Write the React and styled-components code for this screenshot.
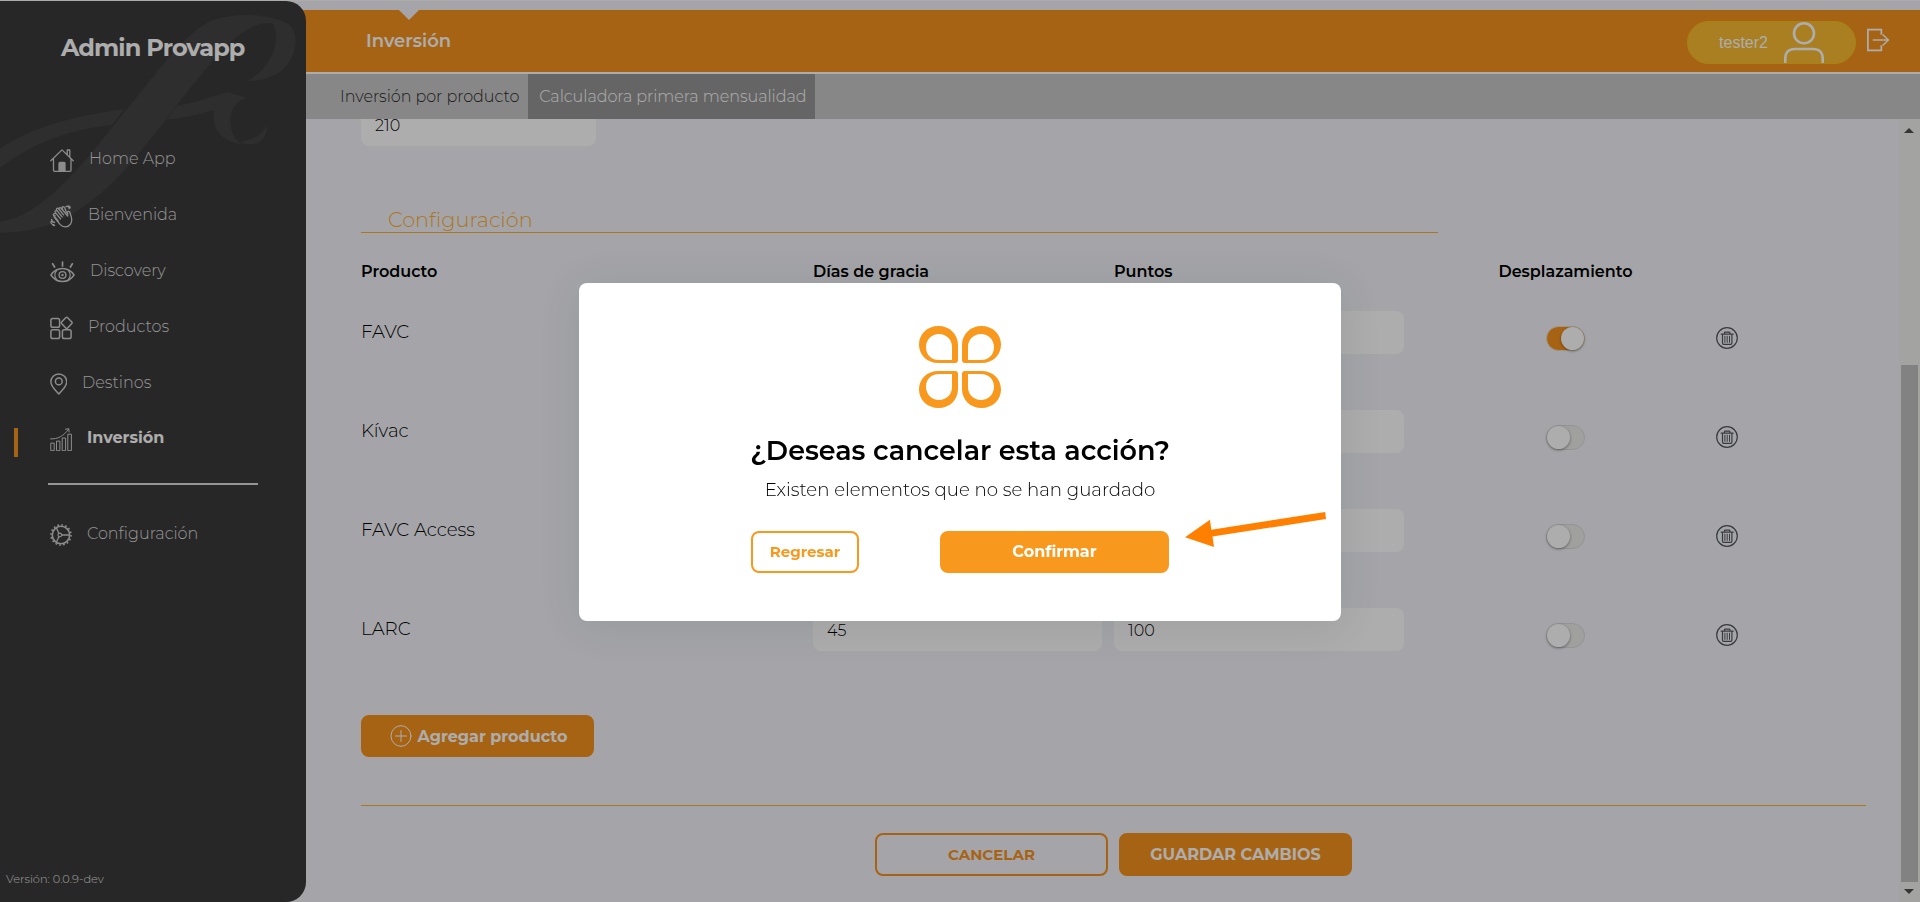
import React, { useState } from "react";
import styled, { createGlobalStyle } from "styled-components";

const GlobalStyle = createGlobalStyle`
  * {
    box-sizing: border-box;
  }
  body {
    margin: 0;
    font-family: "Montserrat", "Inter", sans-serif;
    font-size: 16px;
    color: #000;
    overflow: hidden;
  }
  button, input {
    font-family: inherit;
  }
`;

const Page = styled.div`
  display: flex;
  height: 902px;
  border-top: 1px solid #fefffb;
  background-color: #f3f4f9;
  overflow: hidden;
`;

/* sidebar */
const Sidebar = styled.aside`
  position: relative;
  z-index: 1;
  flex: none;
  width: 306px;
  display: flex;
  flex-direction: column;
  background-color: #3a3a3a;
  border-radius: 0 20px 20px 0;
  overflow: hidden;
`;
const Watermark = styled.svg`
  position: absolute;
  top: -1px;
  left: 0;
  z-index: -1;
`;
const Brand = styled.h1`
  margin: 0;
  height: 129px;
  padding: 32px 0 0 61px;
  font-size: 24px;
  font-weight: 700;
  line-height: 30px;
  letter-spacing: -0.9px;
  color: #fff;
`;
const NavItem = styled.a`
  position: relative;
  display: flex;
  align-items: center;
  gap: 15px;
  height: 55.8px;
  padding: 2px 0 0 50px;
  color: ${(props) => (props.$active ? "#fff" : "#dcdcdc")};
  font-weight: ${(props) => (props.$active ? 700 : 300)};
  svg {
    flex: none;
    margin-top: 3px;
    color: #cfcfcf;
  }
`;
const ActiveMark = styled.span`
  position: absolute;
  left: 14px;
  top: 19px;
  width: 4px;
  height: 29px;
  background-color: #f7931e;
`;
const Divider = styled.hr`
  width: 210px;
  height: 2px;
  margin: 18px 0 20px 48px;
  border: none;
  background-color: #dcdcdc;
`;
const Version = styled.span`
  margin-top: auto;
  padding: 0 0 16px 6px;
  font-size: 11.4px;
  font-weight: 300;
  color: #e4e4e4;
`;

/* top bar and tabs */
const Main = styled.main`
  flex: 1;
  min-width: 0;
  margin-left: -20px;
  padding-top: 9px;
  display: flex;
  flex-direction: column;
`;
const Header = styled.header`
  position: relative;
  flex: none;
  display: flex;
  align-items: center;
  height: 62px;
  padding: 0 30px 0 80px;
  background-color: #f7931e;
  color: #fff;
  > svg {
    margin-bottom: 2px;
  }
`;
const Notch = styled.span`
  position: absolute;
  top: 0;
  left: 113px;
  border: 10px solid transparent;
  border-top-color: #f3f4f9;
  border-bottom: none;
`;
const HeaderTitle = styled.h2`
  margin: 0;
  font-size: 18px;
  font-weight: 600;
`;
const User = styled.div`
  display: flex;
  justify-content: flex-end;
  align-items: center;
  gap: 16px;
  width: 169px;
  height: 43px;
  margin: 2px 10px 0 auto;
  padding-right: 31px;
  border: 1px solid #f7c21a;
  border-radius: 22px;
  background-color: #fabb32;
  font: 16px "Liberation Sans", Arial, sans-serif;
  span {
    padding-top: 2px;
  }
`;
const Tabs = styled.nav`
  flex: none;
  display: flex;
  height: 47px;
  padding-left: 43px;
  border-top: 2px solid #fff;
  background-color: #c8c8c8;
`;
const Tab = styled.a`
  display: flex;
  align-items: center;
  padding: 0 9px 0 11px;
  letter-spacing: -0.05px;
  font-weight: 300;
  color: ${(props) => (props.$active ? "#fff" : "#2b2b2b")};
  background-color: ${(props) => (props.$active ? "#969696" : "transparent")};
`;

/* content */
const Body = styled.div`
  flex: 1;
  min-height: 0;
  display: flex;
  justify-content: space-between;
`;
const Content = styled.section`
  width: 1580px;
  padding-left: 75px;
  overflow: hidden;
`;
const Input = styled.input`
  display: block;
  width: ${(props) => props.$width || "289px"};
  height: 43px;
  padding: 1px 13px 0 14px;
  border: none;
  border-radius: 8px;
  background-color: #fff;
  font-size: 16px;
  font-weight: 300;
  color: #000;
`;
const TopField = styled.div`
  margin-top: -16px;
`;
const SectionTitle = styled.h3`
  display: flex;
  align-items: flex-end;
  width: 1077px;
  height: 87px;
  margin: 0;
  padding-left: 27px;
  border-bottom: 1px solid #fbb034;
  font-size: 20.8px;
  font-weight: 300;
  color: #fbb034;
`;
const Row = styled.div`
  display: grid;
  grid-template-columns: 452px 301px 290px 312px 22px;
  align-items: center;
  height: 43px;
  margin-bottom: 56px;
  font-size: 18.3px;
  font-weight: 300;
`;
const HeadRow = styled(Row)`
  height: 78px;
  margin: 0;
  padding-bottom: 2px;
  font-size: 16px;
  font-weight: 600;
`;
const ProductName = styled.span`
  padding-bottom: 2px;
`;
const Centered = styled.div`
  display: flex;
  justify-content: center;
  padding-left: 11px;
`;
const Switch = styled.button`
  display: flex;
  justify-content: ${(props) => (props.$on ? "flex-end" : "flex-start")};
  width: 39px;
  height: 25px;
  margin-top: 11px;
  padding: 0;
  border: 1px solid ${(props) => (props.$on ? "#e9dccb" : "#d9d9d9")};
  border-radius: 13px;
  background-color: ${(props) => (props.$on ? "#f7931e" : "#ececeb")};
`;
const Knob = styled.span`
  width: 23px;
  height: 23px;
  border-radius: 50%;
  background-color: #fff;
  box-shadow: 0 1px 3px rgba(0, 0, 0, 0.4);
`;
const IconButton = styled.button`
  display: flex;
  margin-top: 11px;
  padding: 0;
  border: none;
  background: none;
  color: #55565c;
`;
const Button = styled.button`
  display: flex;
  align-items: center;
  justify-content: center;
  gap: 6px;
  width: ${(props) => props.$width || "233px"};
  height: ${(props) => props.$height || "42px"};
  padding: 0;
  border: 2px solid ${(props) => props.$color || "#f7931e"};
  border-radius: 8px;
  background-color: ${(props) =>
    props.$outline ? "transparent" : props.$color || "#f7931e"};
  font-size: ${(props) => (props.$outline ? "15px" : "16px")};
  font-weight: 700;
  color: ${(props) => (props.$outline ? props.$color || "#f7931e" : "#fff")};
`;
const AddRow = styled.div`
  margin-top: 64px;
  ${Button} {
    padding-left: 2px;
  }
`;
const Rows = styled.div`
  ${Row}:last-child {
    margin-bottom: 0;
  }
`;
const Footer = styled.footer`
  display: flex;
  justify-content: center;
  gap: 11px;
  margin-top: 48px;
  padding-top: 27px;
  border-top: 1px solid #fbb034;
`;
const Scrollbar = styled.div`
  flex: none;
  display: flex;
  flex-direction: column;
  align-items: center;
  justify-content: space-between;
  width: 21px;
  padding: 9px 1px 8px 0;
  background-color: #f0f0ee;
`;
const ScrollArrow = styled.span`
  border: 5px solid transparent;
  border-top: ${(props) => (props.$up ? "none" : "5px solid #505050")};
  border-bottom: ${(props) => (props.$up ? "5px solid #505050" : "none")};
`;
const Thumb = styled.div`
  width: 17px;
  height: 517px;
  margin-top: auto;
  margin-bottom: 7px;
  background-color: #c0c0c0;
`;

/* dialog */
const Overlay = styled.div`
  position: fixed;
  inset: 0;
  z-index: 10;
  display: flex;
  align-items: center;
  justify-content: center;
  padding-top: 2px;
  background-color: rgba(0, 0, 0, 0.32);
`;
const Dialog = styled.div`
  display: flex;
  flex-direction: column;
  align-items: center;
  width: 762px;
  height: 338px;
  padding-top: 43px;
  border-radius: 8px;
  background-color: #fff;
  box-shadow: 0 4px 46px 8px rgba(0, 0, 0, 0.08);
`;
const DialogTitle = styled.h2`
  margin: 26px 0 10px;
  font-size: 27px;
  font-weight: 600;
  line-height: 34px;
`;
const DialogText = styled.p`
  margin: 0 0 29px;
  font-size: 18.2px;
  font-weight: 300;
  line-height: 24px;
`;
const DialogActions = styled.div`
  display: flex;
  justify-content: space-between;
  width: 418px;
  ${Button} {
    padding-bottom: 2px;
  }
`;
const Pointer = styled.svg`
  position: absolute;
  left: 1180px;
  top: 505px;
  z-index: 11;
`;

const Stroke = ({ w, h, sw = 1.5, children }) => (
  <svg
    width={w}
    height={h}
    viewBox={`0 0 ${w} ${h}`}
    fill="none"
    stroke="currentColor"
    strokeWidth={sw}
    strokeLinecap="round"
    strokeLinejoin="round"
  >
    {children}
  </svg>
);

const HomeIcon = () => (
  <Stroke w={24} h={23} sw={1.3}>
    <path d="M.8 11.8 12 .9l11.2 10.9M3.5 9.8v11.4q0 1.1 1.1 1.1h15.3q1.1 0 1.1-1.1V9.8M17.2 5.5V1h2.6v7" />
    <path d="M9 22v-7.5q0-1 1-1h4q1 0 1 1V22z" fill="currentColor" />
  </Stroke>
);
const ClapIcon = () => (
  <Stroke w={23} h={23} sw={1.3}>
    <path d="M4.6 12.6 10 19.4c3 3.4 8.2 3.2 10.5-.3 1.8-2.7 1.4-5.4.5-8.1l-1.2-3.7c-.5-1.5-2.3-1.200-2.300.3l.2 3.400L10.900 3c-.9-1-2.500.1-1.700 1.300l4.300 5.500" />
    <path d="M9.400 4.700 8.300 3.600c-1.100-1-2.500.3-1.600 1.500l5.400 6.800M6.700 5.900C5.600 5.100 4.400 6.300 5.200 7.400l5.300 6.500M5 8.800c-1.100-.6-2.200.6-1.400 1.700l4.700 5.700M4.600 12.600c-.6-.9-.2-1.700.5-2M12.500 4.500 12 2.500c.9-1.200 2.200-.8 2.700.3l1.700 4.500" />
    <path d="M16 1.600c1.500-.9 3.300.2 3.100 2M18.600.8c1.100.2 1.700 1 1.600 2.100M1 16.400c-.2 2 1.100 3.400 3 3.200M1.600 14.400c.2 1.900 1.500 3 3 3.100M2.300 19.300c.5 1.100 1.300 1.400 2.300 1.300" />
  </Stroke>
);
const EyeIcon = () => (
  <Stroke w={25} h={22} sw={1.4}>
    <path d="M.9 14C3.6 9.9 7.6 7.5 12.5 7.5S21.4 9.9 24.1 14c-2.7 4-6.7 6.5-11.6 6.5S3.6 18 .9 14z" />
    <path d="M6.700 9.200c-2.400 2.800-2.400 6.800 0 9.600M18.300 9.200c2.400 2.800 2.400 6.800 0 9.600" />
    <circle cx="12.5" cy="14" r="3.4" />
    <path d="M12.5 1v4M2.600 2.800l2 3.200M22.400 2.800l-2 3.200" strokeWidth="1.7" />
    <circle cx="12.5" cy="14" r=".5" />
  </Stroke>
);
const ProductsIcon = () => (
  <Stroke w={23} h={24} sw={1.5}>
    <rect x=".9" y="2.6" width="8.7" height="8.7" rx="1.8" />
    <rect x=".9" y="13.8" width="8.7" height="8.7" rx="1.8" />
    <rect x="12.4" y="13.8" width="8.7" height="8.7" rx="1.8" />
    <path d="M16 1.5q.7-.6 1.4 0l4.4 4.6q.6.7 0 1.4l-4.4 4.700q-.7.600-1.400 0l-4.400-4.700q-.6-.7 0-1.400z" />
  </Stroke>
);
const PinIcon = () => (
  <Stroke w={17} h={22} sw={1.5}>
    <path d="M8.800.9c4.500 0 7.900 3.500 7.900 7.900 0 5-4.500 8.300-7.900 12.200C5.400 17.100.9 13.800.9 8.800.9 4.400 4.300.9 8.800.9z" />
    <circle cx="8.8" cy="8.400" r="3.400" />
  </Stroke>
);
const ChartIcon = () => (
  <Stroke w={22} h={23} sw={1}>
    <path d="M.8 22.300v-7.200h3.400v7.200zM6.500 22.300v-9.200h3.400v9.200zM12.200 22.300V10h3.400v12.300zM17.800 22.300V6.200h3.600v16.100zM.6 10.900c7.300.4 13-2.800 17.700-9.500M15.500 1.200l3.300-.5.300 3.300" />
  </Stroke>
);
const GearIcon = () => (
  <Stroke w={22} h={22} sw={1.6}>
    <circle cx="11" cy="11" r="8.7" />
    <circle
      cx="11"
      cy="11"
      r="10.1"
      strokeWidth="1.5"
      strokeDasharray="1.7 2.267"
      strokeLinecap="butt"
    />
    <circle cx="9.800" cy="11" r="1.800" strokeWidth="1.2" />
    <path d="M11.700 11h7.600M8.900 9.400 6.500 4M8.900 12.600 6.500 18" strokeWidth="1.3" />
  </Stroke>
);
const UserIcon = () => (
  <svg width="40" height="41" viewBox="0 0 40 41" fill="none" stroke="#fff" strokeWidth="2.6">
    <circle cx="20" cy="11.300" r="10" />
    <path d="M1.300 41v-4.500c0-6 3.500-9.500 9.500-9.500h18.400c6 0 9.500 3.500 9.500 9.500V41" />
  </svg>
);
const LogoutIcon = () => (
  <svg width="24" height="24" viewBox="0 0 25 24" fill="none" stroke="#fff" strokeWidth="1.8">
    <path d="M16 6.500V1.200H2v21.600h14v-5.300" />
    <path d="M7 12h16.500M17.300 6.200 23.400 12l-6.100 5.800" strokeWidth="1.5" />
  </svg>
);
const TrashIcon = () => (
  <Stroke w={22} h={22} sw={1.2}>
    <circle cx="11" cy="11" r="10.3" />
    <path d="M5.200 7.200h12M8.500 7V5.800q0-.6.600-.6h4.200q.6 0 .6.600V7M6.500 7.500V16q0 1.300 1.200 1.300h7q1.200 0 1.200-1.300V7.500" />
    <path d="M8.900 9.200v6.200M11.200 9.200v6.200M13.500 9.200v6.200" strokeWidth="1" />
  </Stroke>
);
const PlusIcon = () => (
  <Stroke w={22} h={22} sw={1}>
    <ellipse cx="11" cy="11" rx="10" ry="10.3" />
    <path d="M11 5.500v11M5.500 11h11" />
  </Stroke>
);

const Petal = ({ transform }) => (
  <path
    transform={transform}
    fillRule="evenodd"
    d="M19.500 0C30.500 0 39 8 39 19v15q0 3-3 3H19.500C8 37 0 29 0 18.500S8.500 0 19.500 0zM20 8C12.500 8 7 13.500 7 21.200S12.500 34 20 34h13V21C33 13.500 27.500 8 20 8z"
  />
);
const CloverLogo = () => (
  <svg width="82" height="82" viewBox="0 0 82 82" fill="#f8981d">
    <Petal />
    <Petal transform="matrix(-1 0 0 1 82 0)" />
    <Petal transform="matrix(1 0 0 -1 0 82)" />
    <Petal transform="matrix(-1 0 0 -1 82 82)" />
  </svg>
);

const menu = [
  { label: "Home App", Icon: HomeIcon },
  { label: "Bienvenida", Icon: ClapIcon },
  { label: "Discovery", Icon: EyeIcon },
  { label: "Productos", Icon: ProductsIcon },
  { label: "Destinos", Icon: PinIcon },
  { label: "Inversión", Icon: ChartIcon, active: true },
];

const initialProducts = [
  { name: "FAVC", days: "", points: "", on: true },
  { name: "Kívac", days: "", points: "", on: false },
  { name: "FAVC Access", days: "", points: "", on: false },
  { name: "LARC", days: "45", points: "100", on: false },
];

const App = () => {
  const [products, setProducts] = useState(initialProducts);

  const toggle = (name) => {
    setProducts(
      products.map((p) => (p.name === name ? { ...p, on: !p.on } : p))
    );
  };

  return (
    <>
      <GlobalStyle />
      <Page>
        <Sidebar>
          <Watermark width="306" height="240" viewBox="0 0 918 720" fill="#444444">
            <path d="M0 665C100 650 190 560 290 440L380 328C470 220 560 90 640 60 720 35 800 45 850 65 910 85 890 180 840 215 810 235 780 243 742 242 800 215 850 130 818 70 760 60 690 120 640 180 590 240 540 300 500 357L400 480C290 610 170 700 0 698z" />
            <path d="M0 445C110 375 240 345 372 328L335 375C200 390 100 430 0 503zM530 317C600 305 640 288 683 276L743 294C700 300 680 350 697 395 705 420 720 430 728 433 670 425 632 390 642 330 590 345 545 355 500 359zM722 425C760 420 795 400 798 374 806 410 780 433 750 433 735 433 728 430 722 425z" />
          </Watermark>
          <Brand>Admin Provapp</Brand>
          {menu.map(({ label, Icon, active }) => (
            <NavItem key={label} $active={active}>
              {active && <ActiveMark />}
              <Icon />
              {label}
            </NavItem>
          ))}
          <Divider />
          <NavItem>
            <GearIcon />
            Configuración
          </NavItem>
          <Version>Versión: 0.0.9-dev</Version>
        </Sidebar>

        <Main>
          <Header>
            <Notch />
            <HeaderTitle>Inversión</HeaderTitle>
            <User>
              <span>tester2</span>
              <UserIcon />
            </User>
            <LogoutIcon />
          </Header>
          <Tabs>
            <Tab>Inversión por producto</Tab>
            <Tab $active>Calculadora primera mensualidad</Tab>
          </Tabs>
          <Body>
            <Content>
              <TopField>
                <Input $width="235px" defaultValue="210" />
              </TopField>
              <SectionTitle>Configuración</SectionTitle>
              <HeadRow>
                <span>Producto</span>
                <span>Días de gracia</span>
                <span>Puntos</span>
                <Centered>Desplazamiento</Centered>
              </HeadRow>
              <Rows>
                {products.map((item) => (
                  <Row key={item.name}>
                    <ProductName>{item.name}</ProductName>
                    <Input defaultValue={item.days} />
                    <Input $width="290px" defaultValue={item.points} />
                    <Centered>
                      <Switch $on={item.on} onClick={() => toggle(item.name)}>
                        <Knob />
                      </Switch>
                    </Centered>
                    <IconButton>
                      <TrashIcon />
                    </IconButton>
                  </Row>
                ))}
              </Rows>
              <AddRow>
                <Button>
                  <PlusIcon />
                  Agregar producto
                </Button>
              </AddRow>
              <Footer>
                <Button $outline $height="43px">
                  CANCELAR
                </Button>
                <Button $height="43px">GUARDAR CAMBIOS</Button>
              </Footer>
            </Content>
            <Scrollbar>
              <ScrollArrow $up />
              <Thumb />
              <ScrollArrow />
            </Scrollbar>
          </Body>
        </Main>
      </Page>

      <Overlay>
        <Dialog>
          <CloverLogo />
          <DialogTitle>¿Deseas cancelar esta acción?</DialogTitle>
          <DialogText>Existen elementos que no se han guardado</DialogText>
          <DialogActions>
            <Button $outline $width="108px" $color="#f8981d">
              Regresar
            </Button>
            <Button $width="229px" $color="#f8981d">
              Confirmar
            </Button>
          </DialogActions>
        </Dialog>
        <Pointer width="150" height="46" viewBox="0 0 150 46" fill="#ff8000">
          <path d="M5 32.300 30 14.800 31.300 24.700 145.200 7 146 14 32.500 31.500 34 42z" />
        </Pointer>
      </Overlay>
    </>
  );
};

export default App;
